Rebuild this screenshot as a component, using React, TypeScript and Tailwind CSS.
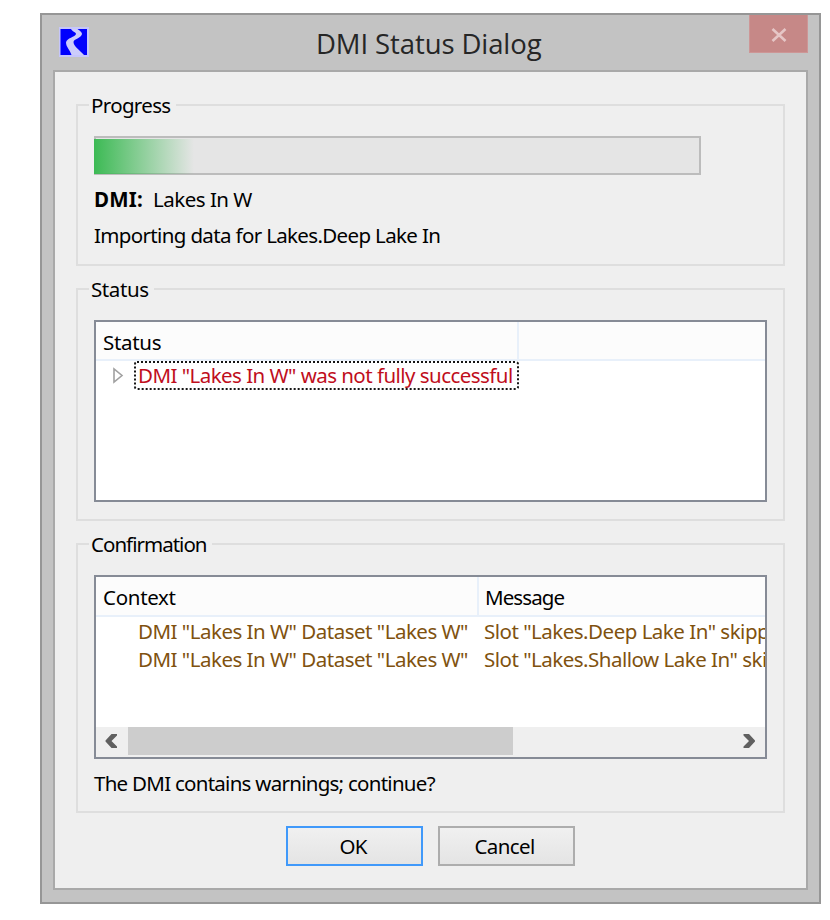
import type { ReactNode } from "react";

function Group({ title, spacing, className, children }: { title: string; spacing: string; className: string; children: ReactNode }) {
  return (
    <section className={`border-2 border-[#dedede] px-[16px] ${className}`}>
      <h2 className={`-ml-[5px] -mt-[16px] h-[30px] w-fit bg-[#efefef] pl-[2px] pr-[5px] leading-[30px] ${spacing}`}>{title}</h2>
      {children}
    </section>
  );
}

function RiverIcon() {
  return (
    <svg className="mt-[12px] ml-[17px] h-[30px] w-[30px]" viewBox="0 0 30 30">
      <rect width="30" height="30" fill="#c6c6fb" />
      <rect x="1.500" y="2" width="26.500" height="26" fill="#0000fd" />
      <path d="M12 2H18.500C20 3.500 23 4.500 23 7C22.500 11 14.500 12 14.500 15C14.500 19 20 22.500 25 28H12.500C11 23 7 20 7 15.500C7.500 11 16.500 10 17 7C17 5 13 4.500 12 2Z" fill="#ccccfb" />
    </svg>
  );
}

function ContextRow({ message }: { message: string }) {
  return (
    <div className="flex h-[28px] whitespace-nowrap leading-[28px] tracking-[-0.5px] text-[#80520f]">
      <span className="w-[388px] shrink-0 pl-[42px]">DMI "Lakes In W" Dataset "Lakes W"</span>
      <span>{message}</span>
    </div>
  );
}

export default function App() {
  return (
    <main className="h-[920px] w-[830px] overflow-hidden bg-white pl-[40px] pt-[13px] font-['Noto_Sans',sans-serif] text-[20.5px] text-black">
      <div className="h-[891px] w-[781px] border-2 border-[#969696] bg-[#c3c3c3]">
        <header className="flex h-[55px] items-start">
          <RiverIcon />
          <h1 className="ml-[227px] mt-[9px] w-[433px] whitespace-nowrap font-['Open_Sans',sans-serif] text-[27.500px] leading-[40px] tracking-[-0.1px] text-[#262626]">
            DMI Status Dialog
          </h1>
          <button className="flex h-[38px] w-[59px] items-center justify-center border border-t-0 border-[#cd9696] bg-[#c68887]">
            <svg className="mt-[3px] h-[16px] w-[16px]" viewBox="0 0 16 16">
              <path d="M1.500 2L14.500 14M14.500 2L1.500 14" stroke="#e6c6c6" strokeWidth="2.600" />
            </svg>
          </button>
        </header>
        <div className="ml-[11px] h-[820px] w-[755px] border-2 border-[#a9a9a9] bg-[#efefef] pl-[21px] pt-[32px]">
          <Group title="Progress" spacing="tracking-[-0.65px]" className="h-[162px] w-[709px]">
            <div className="mt-[16px] h-[39px] w-[607px] border-2 border-[#bcbcbc] bg-[#e5e5e5]">
              <div className="-ml-[2px] mt-[1px] h-[35px] w-[100px] bg-linear-to-r from-[#3cba54] to-[#e5e5e5]/0" />
            </div>
            <p className="mt-[9px] flex leading-[30px]">
              <b className="w-[59px] tracking-[0.2px]">DMI:</b>
              <span className="tracking-[-0.5px]">Lakes In W</span>
            </p>
            <p className="mt-[6px] w-fit leading-[30px] tracking-[-0.65px]">Importing data for Lakes.Deep Lake In</p>
          </Group>
          <Group title="Status" spacing="tracking-[-0.4px]" className="mt-[22px] h-[233px] w-[709px]">
            <div className="mt-[16px] h-[182px] w-[673px] border-2 border-[#868b96] bg-white">
              <div className="flex h-[39px] border-b-2 border-[#e8f0fa] bg-[#fcfcfc] leading-[40px]">
                <span className="w-[423px] border-r-2 border-[#e8f0fa] pl-[7px] tracking-[-0.3px]">Status</span>
              </div>
              <div className="flex items-start">
                <svg className="ml-[16px] mt-[6px] h-[18px] w-[12px]" viewBox="0 0 12 18">
                  <path d="M2 2V15L10 8.500Z" fill="white" stroke="#a1a1a1" strokeWidth="1.600" />
                </svg>
                <div className="relative ml-[10px] h-[29px] w-[385px] pl-[4px] leading-[29px] tracking-[-0.54px] whitespace-nowrap text-[#c00e1c]">
                  <svg className="absolute inset-0 h-[29px] w-[385px]" viewBox="0 0 385 29">
                    <rect x="1" y="1" width="383" height="27" rx="2" fill="none" stroke="#161616" strokeWidth="2" strokeDasharray="2 2" />
                  </svg>
                  DMI "Lakes In W" was not fully successful
                </div>
              </div>
            </div>
          </Group>
          <Group title="Confirmation" spacing="tracking-[-0.98px]" className="mt-[22px] h-[270px] w-[709px]">
            <div className="mt-[16px] flex h-[184px] w-[673px] flex-col overflow-hidden border-2 border-[#868b96] bg-white">
              <div className="flex h-[40px] shrink-0 border-b-2 border-[#e8f0fa] bg-[#fcfcfc] leading-[41px]">
                <span className="w-[383px] border-r-2 border-[#e8f0fa] pl-[7px] tracking-[-0.3px]">Context</span>
                <span className="pl-[6px] tracking-[-0.9px]">Message</span>
              </div>
              <div className="h-[110px] shrink-0 overflow-hidden">
                <ContextRow message={'Slot "Lakes.Deep Lake In" skipp'} />
                <ContextRow message={'Slot "Lakes.Shallow Lake In" skip'} />
              </div>
              <div className="flex h-[30px] shrink-0 bg-[#efefef]">
                <svg className="h-[28px] w-[32px]" viewBox="0 0 32 28">
                  <path d="M15.500 7H21V8.500L15.500 14L21 19.500V21H15.500L9.500 14.500V13.500Z" fill="#606060" />
                </svg>
                <div className="h-[28px] w-[385px] bg-[#cdcdcd]" />
                <svg className="ml-[220px] h-[28px] w-[32px]" viewBox="0 0 32 28">
                  <path d="M16 7H10.500V8.500L16 14L10.500 19.500V21H16L22 14.500V13.500Z" fill="#606060" />
                </svg>
              </div>
            </div>
            <p className="mt-[9px] w-fit leading-[30px] tracking-[-0.73px]">The DMI contains warnings; continue?</p>
          </Group>
          <div className="ml-[210px] mt-[13px] flex gap-[15px]">
            <button className="h-[40px] w-[137px] border-2 border-[#4099fa] bg-linear-to-b from-[#f0f0f0] to-[#e4e4e4] pr-[3px] tracking-[-0.8px]">OK</button>
            <button className="h-[40px] w-[137px] border-2 border-[#adadad] bg-linear-to-b from-[#f0f0f0] to-[#e4e4e4] pr-[4px] tracking-[-0.6px]">Cancel</button>
          </div>
        </div>
      </div>
    </main>
  );
}
